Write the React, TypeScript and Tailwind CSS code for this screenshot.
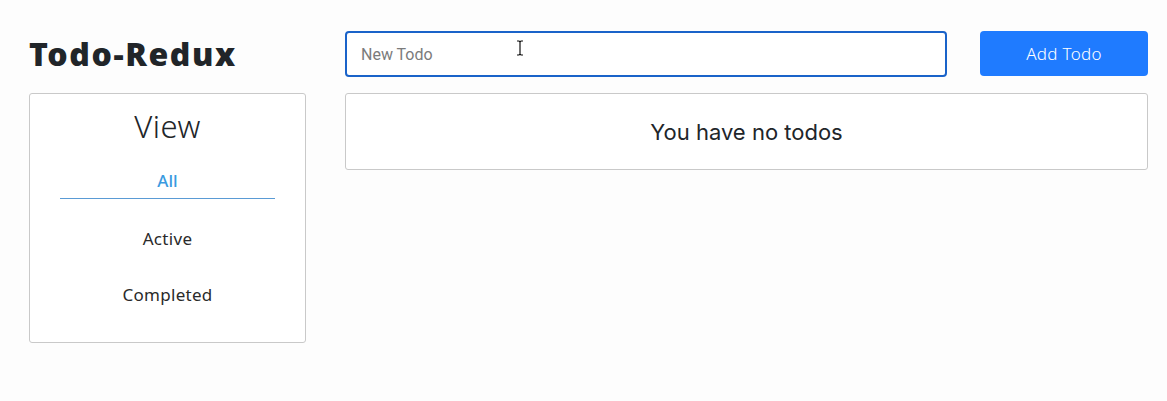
import React from 'react';

const views = ['All', 'Active', 'Completed'];

export default function App() {
  const active = 'All';

  return (
    <div className="min-h-[401px] bg-[#fdfdfd] pl-[29px] pr-[19px] pt-[31px] font-['Noto_Sans',sans-serif] text-[#212529]">
      <div className="flex items-start gap-[39px]">
        <div className="w-[277px] shrink-0">
          <h1 className="flex h-[46px] items-center text-[32px] font-black tracking-[1.6px]">Todo-Redux</h1>
        </div>
        <div className="flex flex-1 gap-[33px]">
          <div className="relative flex-1">
            <input
              type="text"
              placeholder="New Todo"
              className="h-[46px] w-full rounded-[4px] border-2 border-[#1a63c9] bg-white px-[14px] font-['Roboto',sans-serif] text-[16px] text-[#495057] outline-none placeholder:text-[#7b7b7b]"
            />
            <svg className="absolute left-[171px] top-[9px]" width="8" height="16" viewBox="0 0 8 16">
              <path d="M1 1h2l1 1 1-1h2M4 2v12M1 15h2l1-1 1 1h2" fill="none" stroke="#111" strokeWidth="1.2" />
            </svg>
          </div>
          <button className="h-[45px] w-[168px] rounded-[4px] bg-[#1f7bff] text-[17px] font-light tracking-[0.3px] text-white">
            Add Todo
          </button>
        </div>
      </div>

      <div className="mt-[16px] flex items-start gap-[39px]">
        <div className="flex h-[250px] w-[277px] shrink-0 flex-col items-center rounded-[3px] border border-[#c9c9c9] bg-white">
          <h2 className="mt-[12px] text-[31px] font-light leading-[40px] tracking-[0.5px]">View</h2>
          <ul className="mt-[24px] flex w-[215px] flex-col">
            {views.map((v, i) => (
              <li
                key={v}
                className={
                  v === active
                    ? 'border-b border-[#5a9bd5] pb-[6px] text-center text-[17px] font-medium leading-[22px] text-[#3a9ae0]'
                    : i === 1
                      ? 'mt-[29px] text-center text-[17px] leading-[22px] tracking-[0.3px] text-[#2a2a2a]'
                      : 'mt-[34px] text-center text-[17px] leading-[22px] tracking-[0.3px] text-[#2a2a2a]'
                }
              >
                {v}
              </li>
            ))}
          </ul>
        </div>
        <div className="flex h-[77px] flex-1 items-center justify-center rounded-[3px] border border-[#c9c9c9] bg-white">
          <p className="mt-[2px] font-['Inter',sans-serif] text-[22px] text-[#212529]">You have no todos</p>
        </div>
      </div>
    </div>
  );
}
